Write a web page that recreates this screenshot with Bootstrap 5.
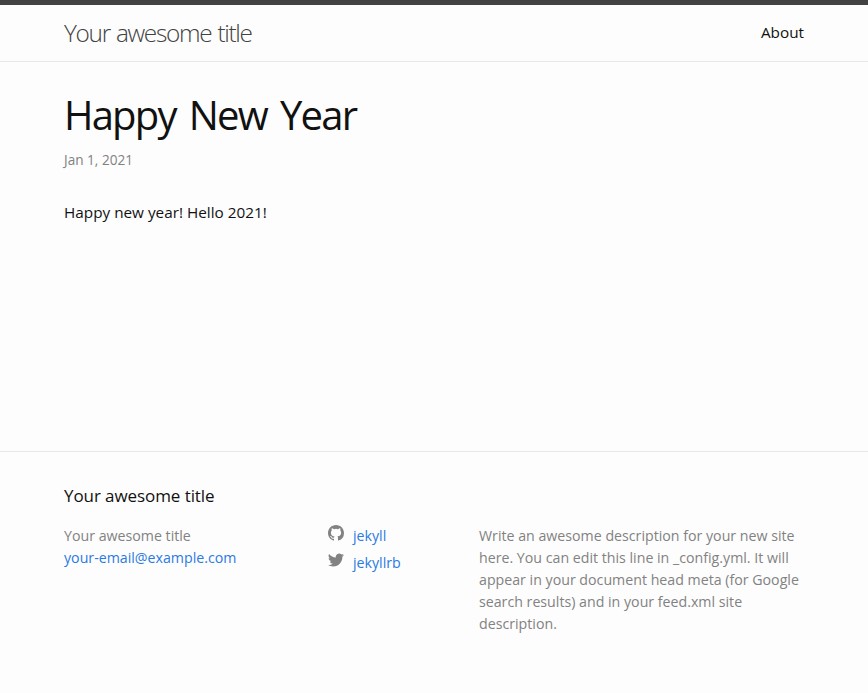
<!DOCTYPE html>
<html lang="en">
<head>
<meta charset="utf-8">
<meta name="viewport" content="width=device-width, initial-scale=1">
<title>Happy New Year</title>
<link href="https://cdn.jsdelivr.net/npm/bootstrap@5.3.0/dist/css/bootstrap.min.css" rel="stylesheet">
<style>
body{font:400 15.3px/24px "Open Sans","Noto Sans",sans-serif;color:#111;background:#fdfdfd;min-height:693px}
.wrapper{width:740px;margin:0 auto}
.site-header{border-top:5px solid #424242;border-bottom:1px solid #e8e8e8;height:62px}
.site-title{font-size:24.4px;font-weight:300;letter-spacing:-1.3px;word-spacing:1px;line-height:56px;color:#424242}
.top-link{line-height:54px;font-size:15.3px;color:#111}
.post{height:389px;padding-top:32px}
.post-title{font-size:40px;letter-spacing:-1.8px;word-spacing:4.5px;line-height:42px;font-weight:400;margin-bottom:13px}
.post-meta{font-size:13.6px;line-height:21px;color:#828282;margin-bottom:30px}
.site-footer{border-top:1px solid #e8e8e8;padding-top:30px}
.footer-heading{font-size:17px;letter-spacing:-.08px;line-height:27px;margin-bottom:16px}
.footer-cols{font-size:14.2px;line-height:22px;color:#828282}
.footer-cols a{color:#2a7ae2}
.contact-col{width:263px}
.social-col{width:152px}
.about-col{width:325px}
.social-row{height:27px;padding-left:1px}
.social-row svg{width:16px;height:16px;fill:#828282;margin:0 9px 0 0}
</style>
</head>
<body>
<header class="site-header">
  <div class="wrapper d-flex justify-content-between">
    <a class="site-title text-decoration-none" href="#">Your awesome title</a>
    <a class="top-link text-decoration-none" href="#">About</a>
  </div>
</header>
<main class="post">
  <div class="wrapper">
    <h1 class="post-title">Happy New Year</h1>
    <p class="post-meta">Jan 1, 2021</p>
    <p class="mb-0">Happy new year! Hello 2021!</p>
  </div>
</main>
<footer class="site-footer">
  <div class="wrapper">
    <h2 class="footer-heading fw-normal">Your awesome title</h2>
    <div class="footer-cols d-flex">
      <div class="contact-col">Your awesome title<br><a class="text-decoration-none" href="#">your-email@example.com</a></div>
      <div class="social-col">
        <div class="social-row d-flex align-items-start"><svg viewBox="0 0 16 16"><path fill-rule="evenodd" d="M8 0C3.58 0 0 3.58 0 8c0 3.54 2.29 6.53 5.47 7.59.4.07.55-.17.55-.38 0-.19-.01-.82-.01-1.49-2.01.37-2.53-.49-2.69-.94-.09-.23-.48-.94-.82-1.13-.28-.15-.68-.52-.01-.53.63-.01 1.08.58 1.23.82.72 1.21 1.87.87 2.33.66.07-.52.28-.87.51-1.07-1.78-.2-3.64-.89-3.64-3.95 0-.87.31-1.59.82-2.15-.08-.2-.36-1.02.08-2.12 0 0 .67-.21 2.2.82a7.6 7.6 0 0 1 4 0c1.53-1.04 2.2-.82 2.2-.82.44 1.1.16 1.92.08 2.12.51.56.82 1.27.82 2.15 0 3.07-1.87 3.75-3.65 3.95.29.25.54.73.54 1.48 0 1.07-.01 1.93-.01 2.2 0 .21.15.46.55.38A8.01 8.01 0 0 0 16 8c0-4.42-3.58-8-8-8z"/></svg><a class="text-decoration-none" href="#">jekyll</a></div>
        <div class="social-row d-flex align-items-start"><svg viewBox="0 0 16 16"><path d="M15.97 3.06a6.6 6.6 0 0 1-1.88.52 3.3 3.3 0 0 0 1.44-1.82 6.6 6.6 0 0 1-2.08.8 3.28 3.28 0 0 0-5.59 2.99A9.3 9.3 0 0 1 1.1 2.12a3.28 3.28 0 0 0 1.02 4.38 3.3 3.3 0 0 1-1.49-.41v.04a3.28 3.28 0 0 0 2.63 3.22 3.3 3.3 0 0 1-1.48.06 3.28 3.28 0 0 0 3.06 2.28A6.6 6.6 0 0 1 0 13.05a9.3 9.3 0 0 0 5.03 1.47c6.04 0 9.34-5 9.34-9.34l-.01-.42a6.7 6.7 0 0 0 1.61-1.7z"/></svg><a class="text-decoration-none" href="#">jekyllrb</a></div>
      </div>
      <div class="about-col text-nowrap">Write an awesome description for your new site<br>here. You can edit this line in _config.yml. It will<br>appear in your document head meta (for Google<br>search results) and in your feed.xml site<br>description.</div>
    </div>
  </div>
</footer>
<script src="https://cdn.jsdelivr.net/npm/bootstrap@5.3.0/dist/js/bootstrap.bundle.min.js"></script>
</body>
</html>
